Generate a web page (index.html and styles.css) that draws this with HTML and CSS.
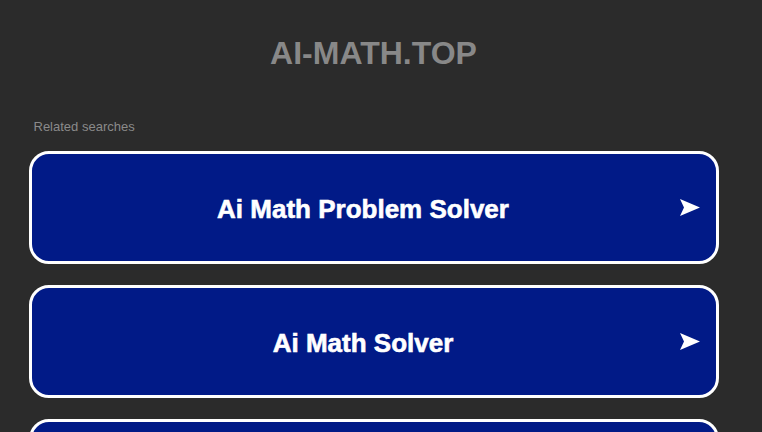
FILE: index.html
```html
<!DOCTYPE html>
<html lang="en">
<head>
    <meta charset="UTF-8">
    <meta name="viewport" content="width=device-width, initial-scale=1.0">
    <title>ai-math.top</title>
    <link rel="stylesheet" href="styles.css">
</head>
<body>
    <header>
        <h1>AI-MATH.TOP</h1>
    </header>
    <div class="related">
        <div class="related-title">Related searches</div>
        <a class="search" href="#">
            <span class="search-text">Ai Math Problem Solver</span>
            <svg class="arrow" width="20" height="18" viewBox="0 0 20 18"><polygon points="0,0 20,8.5 0,17 4,8.5" fill="#fff"/></svg>
        </a>
        <a class="search" href="#">
            <span class="search-text">Ai Math Solver</span>
            <svg class="arrow" width="20" height="18" viewBox="0 0 20 18"><polygon points="0,0 20,8.5 0,17 4,8.5" fill="#fff"/></svg>
        </a>
        <a class="search" href="#">
            <span class="search-text">Math Homework Help</span>
            <svg class="arrow" width="20" height="18" viewBox="0 0 20 18"><polygon points="0,0 20,8.5 0,17 4,8.5" fill="#fff"/></svg>
        </a>
        <a class="search" href="#">
            <span class="search-text">Online Math Tutor</span>
            <svg class="arrow" width="20" height="18" viewBox="0 0 20 18"><polygon points="0,0 20,8.5 0,17 4,8.5" fill="#fff"/></svg>
        </a>
    </div>
</body>
</html>
```

FILE: styles.css
```css
body {
    font-family: "Liberation Sans", Arial, sans-serif;
    background-color: #2b2b2b;
    margin: 0;
    padding: 0 15px 0 0;
}
header {
    padding-top: 35px;
    text-align: center;
}
header h1 {
    margin: 0;
    font-size: 32px;
    line-height: 37px;
    font-weight: bold;
    color: #888888;
}
.related {
    width: 690px;
    margin: 47px auto 0;
}
.related-title {
    font-size: 13px;
    line-height: 16px;
    color: #8a8a8a;
    padding-left: 5px;
    margin-bottom: 16px;
}
.search {
    display: flex;
    align-items: center;
    height: 107px;
    padding: 0 16px 0 10px;
    margin-bottom: 21px;
    background-color: #011a87;
    border: 3px solid #ffffff;
    border-radius: 20px;
    text-decoration: none;
}
.search-text {
    flex: 1;
    text-align: center;
    font-size: 26px;
    font-weight: bold;
    color: #ffffff;
    -webkit-text-stroke: 0.6px #ffffff;
    padding-top: 3px;
}
.arrow {
    flex: none;
    margin-left: -5px;
}
```
